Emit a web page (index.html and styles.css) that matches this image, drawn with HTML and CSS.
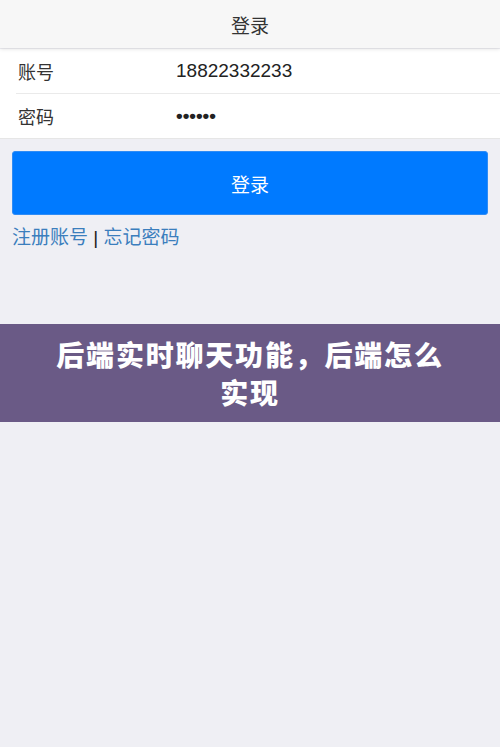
FILE: index.html
```html
<!DOCTYPE html>
<html lang="zh-CN">
<head>
<meta charset="utf-8">
<title>登录</title>
<link rel="stylesheet" href="styles.css">
</head>
<body>
<header class="bar"><h1 class="bar-title">登录</h1></header>
<ul class="form-list">
  <li class="form-row"><span class="form-label">账号</span><span class="form-value">18822332233</span></li>
  <li class="form-row"><span class="form-label">密码</span><span class="form-value dots">••••••</span></li>
</ul>
<div class="actions">
  <button class="btn-login">登录</button>
  <p class="links"><a class="link">注册账号</a> <span class="sep">|</span> <a class="link">忘记密码</a></p>
</div>
<div class="banner">
  <p class="banner-text">后端实时聊天功能，后端怎么实现</p>
</div>
</body>
</html>
```
FILE: styles.css
```css
html, body {
  margin: 0;
  padding: 0;
  background: #efeff4;
  font-family: "Liberation Sans", "Noto Sans CJK SC", sans-serif;
  color: #333;
}
.bar {
  height: 48px;
  background: #f7f7f7;
  box-shadow: 0 1px 4px rgba(0,0,0,0.12);
  display: flex;
  align-items: center;
  justify-content: center;
  position: relative;
  z-index: 1;
}
.bar-title {
  margin: 0;
  font-size: 19px;
  font-weight: normal;
  color: #333;
}
.form-list {
  list-style: none;
  margin: 1px 0 0;
  padding: 0 0 0 16px;
  background: #fff;
  border-bottom: 1px solid #e6e6e6;
}
.form-row {
  height: 44px;
  display: flex;
  align-items: center;
  border-bottom: 1px solid #eaeaea;
}
.form-row:last-child { border-bottom: none; }
.form-label {
  width: 158px;
  padding-left: 2px;
  font-size: 18px;
  color: #333;
}
.form-value {
  font-size: 19px;
  color: #222;
}
.dots {
  font-size: 19px;
  font-weight: bold;
}
.actions {
  padding: 0 12px;
}
.btn-login {
  display: block;
  width: 100%;
  height: 64px;
  margin-top: 12px;
  background: #007aff;
  border: 1px solid #2f8cf5;
  border-radius: 3px;
  color: #fff;
  font-family: "Liberation Sans", "Noto Sans CJK SC", sans-serif;
  font-size: 19px;
  padding: 0;
}
.links {
  margin: 11px 0 0;
  font-size: 19px;
  line-height: 24px;
}
.link { color: #3b7ebd; }
.sep { color: #222; }
.banner {
  margin-top: 74px;
  height: 98px;
  background: #6a5a86;
  display: flex;
  align-items: center;
  justify-content: center;
  padding: 0 50px;
}
.banner-text {
  margin: 0;
  color: #fff;
  font-family: "Noto Sans CJK SC", sans-serif;
  font-weight: 900;
  font-size: 28px;
  letter-spacing: 1.8px;
  line-height: 38px;
  text-align: center;
}
```
